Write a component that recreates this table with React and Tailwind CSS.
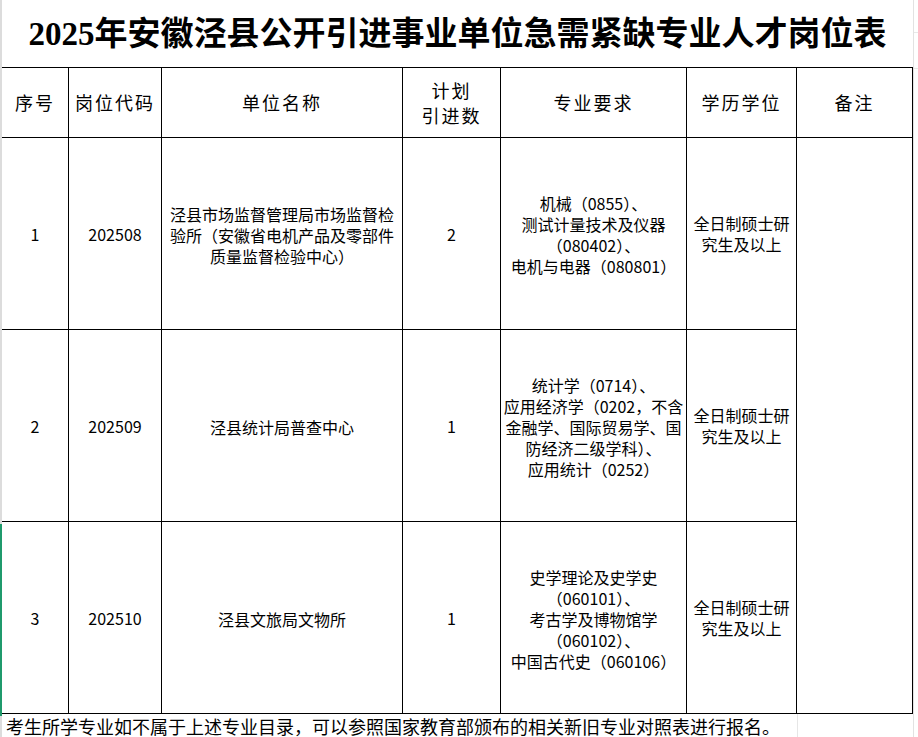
import React from 'react';

const rows = [
  {
    no: '1',
    code: '202508',
    unit: ['泾县市场监督管理局市场监督检', '验所（安徽省电机产品及零部件', '质量监督检验中心）'],
    count: '2',
    major: ['机械（0855）、', '测试计量技术及仪器', '（080402）、', '电机与电器（080801）'],
  },
  {
    no: '2',
    code: '202509',
    unit: ['泾县统计局普查中心'],
    count: '1',
    major: ['统计学（0714）、', '应用经济学（0202，不含', '金融学、国际贸易学、国', '防经济二级学科）、', '应用统计（0252）'],
  },
  {
    no: '3',
    code: '202510',
    unit: ['泾县文旅局文物所'],
    count: '1',
    major: ['史学理论及史学史', '（060101）、', '考古学及博物馆学', '（060102）、', '中国古代史（060106）'],
  },
];

function Lines({ items }) {
  return (
    <div className="whitespace-nowrap text-center leading-[21px]">
      {items.map((t, i) => (
        <div key={i}>{t}</div>
      ))}
    </div>
  );
}

export default function App() {
  const cell = 'flex items-center justify-center border-r border-b border-black';
  const head = cell + ' text-[18px] tracking-[2px] leading-[25px] text-center';

  return (
    <div
      className="flex w-[918px] h-[737px] overflow-hidden bg-white text-black"
      style={{ fontFamily: '"Noto Sans CJK SC", "Noto Sans", sans-serif' }}
    >
      {/* spreadsheet row header edge */}
      <div className="flex w-[2px] flex-col">
        <div className="h-[524px] bg-[#dcdcdc]" />
        <div className="h-[192px] bg-[#1f9a6c]" />
        <div className="flex-1 bg-[#dcdcdc]" />
      </div>

      <div className="flex w-[911px] flex-col">
        {/* Title */}
        <div
          className="flex h-[69px] items-center justify-center pt-[3px] text-[33px] font-semibold"
          style={{ fontFamily: '"Liberation Serif", "Noto Sans CJK SC", serif' }}
        >
          2025年安徽泾县公开引进事业单位急需紧缺专业人才岗位表
        </div>

        {/* Table */}
        <div className="grid grid-cols-[67px_93px_241px_98px_186px_110px_116px] grid-rows-[70px_192px_192px_192px] border-t border-black text-[16px]">
          <div className={head}>序号</div>
          <div className={head}>岗位代码</div>
          <div className={head}>单位名称</div>
          <div className={head}>
            <div>计划<br />引进数</div>
          </div>
          <div className={head}>专业要求</div>
          <div className={head}>学历学位</div>
          <div className={head}>备注</div>

          {rows.map((r, i) => (
            <React.Fragment key={r.code}>
              <div className={cell}>{r.no}</div>
              <div className={cell}>{r.code}</div>
              <div className={cell + ' pt-[3px]'}>
                <Lines items={r.unit} />
              </div>
              <div className={cell}>{r.count}</div>
              <div className={cell + ' pt-[3px]'}>
                <Lines items={r.major} />
              </div>
              <div className={cell}>
                <Lines items={['全日制硕士研', '究生及以上']} />
              </div>
              {i === 0 && <div className={cell + ' row-span-3'} />}
            </React.Fragment>
          ))}
        </div>

        {/* Footer note */}
        <div className="flex">
          <div className="w-[795px] pl-[4px] pt-[1px] text-[18px] leading-[22px] whitespace-nowrap">
            考生所学专业如不属于上述专业目录，可以参照国家教育部颁布的相关新旧专业对照表进行报名。
          </div>
          <div className="flex-1 border-l border-[#e6e6e6]" />
        </div>
      </div>

      <div className="flex flex-1 flex-col border-l border-[#e2e2e2]">
        <div className="h-[33px] border-b border-[#e8e8e8]" />
        <div className="h-[36px] border-b border-[#e8e8e8]" />
      </div>
    </div>
  );
}
